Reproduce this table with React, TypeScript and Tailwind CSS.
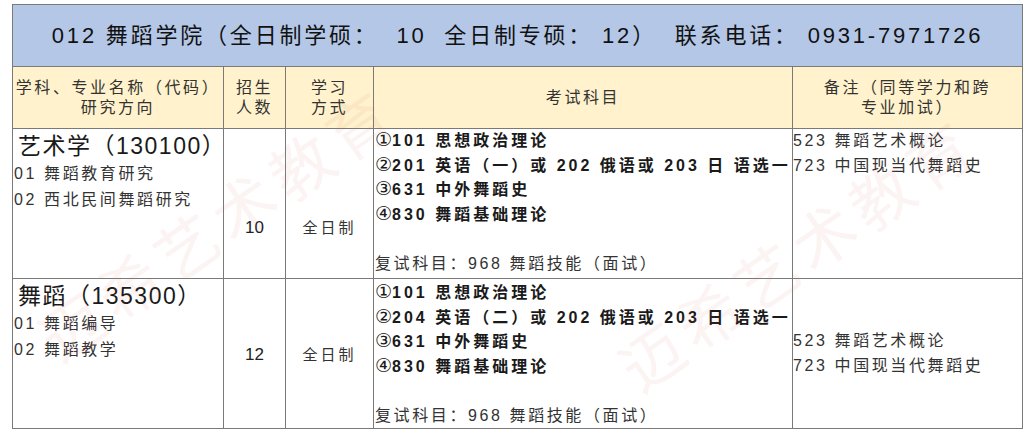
const FONT = '"Liberation Sans", "Noto Sans CJK SC", sans-serif';

type Major = {
  title: string;
  directions: string[];
  count: string;
  exams: [string, string][];
  retest: string;
  remarks: string[];
  countPad: string;
  remarkPad: string;
};

const MAJORS: Major[] = [
  {
    title: '艺术学（130100）',
    directions: ['01 舞蹈教育研究', '02 西北民间舞蹈研究'],
    count: '10',
    exams: [
      ['①', '101 思想政治理论'],
      ['②', '201 英语（一）或 202 俄语或 203 日 语选一'],
      ['③', '631 中外舞蹈史'],
      ['④', '830 舞蹈基础理论'],
    ],
    retest: '复试科目：968 舞蹈技能（面试）',
    remarks: ['523 舞蹈艺术概论', '723 中国现当代舞蹈史'],
    countPad: 'pt-[87px]',
    remarkPad: 'pt-[0px]',
  },
  {
    title: '舞蹈（135300）',
    directions: ['01 舞蹈编导', '02 舞蹈教学'],
    count: '12',
    exams: [
      ['①', '101 思想政治理论'],
      ['②', '204 英语（二）或 202 俄语或 203 日 语选一'],
      ['③', '631 中外舞蹈史'],
      ['④', '830 舞蹈基础理论'],
    ],
    retest: '复试科目：968 舞蹈技能（面试）',
    remarks: ['523 舞蹈艺术概论', '723 中国现当代舞蹈史'],
    countPad: 'pt-[64px]',
    remarkPad: 'pt-[48px]',
  },
];

function MajorRow({ m, top }: { m: Major; top: string }) {
  return (
    <tr className="h-[150px] align-top">
      <td className="border border-[#7a7a7a] pl-[1px] pt-[2px]">
        <div className="ml-[4px] text-[23px] leading-[30px] tracking-[1.5px] text-[#1a1a1a]">{m.title}</div>
        {m.directions.map((d) => (
          <div key={d} className="text-[16px] leading-[26px] tracking-[2.6px] text-[#333]">
            {d}
          </div>
        ))}
      </td>
      <td className={`border border-[#7a7a7a] text-center text-[17px] leading-[24px] text-[#222] ${m.countPad}`}>
        {m.count}
      </td>
      <td className={`border border-[#7a7a7a] text-center text-[15px] leading-[24px] tracking-[3px] text-[#333] ${m.countPad}`}>
        全日制
      </td>
      <td className={`border border-[#7a7a7a] pl-[1px] ${top}`}>
        {m.exams.map(([n, e]) => (
          <div key={e} className="whitespace-nowrap text-[16px] font-bold leading-[24.5px] tracking-[3px] text-[#1a1a1a]">
            <span className="text-[19px] font-normal leading-none tracking-[0px]" style={{ fontFamily: '"DejaVu Sans", sans-serif' }}>
              {n}
            </span>
            {e}
          </div>
        ))}
        <div className="h-[24.5px]" />
        <div className="whitespace-nowrap text-[16px] leading-[24.5px] tracking-[2.6px] text-[#333]">
          {m.retest}
        </div>
      </td>
      <td className={`border border-[#7a7a7a] ${top}`}>
        <div className={m.remarkPad}>
          {m.remarks.map((r) => (
            <div key={r} className="whitespace-nowrap text-[16px] leading-[24.5px] tracking-[2.6px] text-[#333]">
              {r}
            </div>
          ))}
        </div>
      </td>
    </tr>
  );
}

export default function App() {
  return (
    <div className="relative h-[439px] w-[1031px] overflow-hidden bg-white" style={{ fontFamily: FONT }}>
      <div className="pl-[12px] pt-[4px]">
        <table className="w-[1010px] table-fixed border-collapse">
          <colgroup>
            <col className="w-[211px]" />
            <col className="w-[62px]" />
            <col className="w-[88px]" />
            <col className="w-[419px]" />
            <col className="w-[230px]" />
          </colgroup>
          <tbody>
            <tr className="h-[62px]">
              <td
                colSpan={5}
                className="border border-[#7a7a7a] bg-[#b4c7e7] text-center text-[22px] tracking-[2.8px] text-[#111]"
              >
                012 舞蹈学院（全日制学硕：&nbsp; 10&nbsp; 全日制专硕：&nbsp;12）&nbsp; 联系电话：&nbsp;0931-7971726
              </td>
            </tr>
            <tr className="h-[62px] bg-[#fff2cc] text-center text-[16px] leading-[20px] tracking-[2.6px] text-[#333]">
              <td className="border border-[#7a7a7a]">
                学科、专业名称（代码）
                <br />
                研究方向
              </td>
              <td className="border border-[#7a7a7a]">
                招生
                <br />
                人数
              </td>
              <td className="border border-[#7a7a7a]">
                学习
                <br />
                方式
              </td>
              <td className="border border-[#7a7a7a]">考试科目</td>
              <td className="border border-[#7a7a7a]">
                备注（同等学力和跨
                <br />
                专业加试）
              </td>
            </tr>
            <MajorRow m={MAJORS[0]} top="pt-[0px]" />
            <MajorRow m={MAJORS[1]} top="pt-[2px]" />
          </tbody>
        </table>
      </div>

      {/* watermark */}
      <div className="pointer-events-none absolute left-[10px] top-[180px] -rotate-[35deg] select-none whitespace-nowrap text-[62px] tracking-[8px] text-[#e06060] opacity-[0.07]">
        迈希艺术教育
      </div>
      <div className="pointer-events-none absolute left-[590px] top-[210px] -rotate-[35deg] select-none whitespace-nowrap text-[62px] tracking-[8px] text-[#e06060] opacity-[0.07]">
        迈希艺术教育
      </div>
    </div>
  );
}
